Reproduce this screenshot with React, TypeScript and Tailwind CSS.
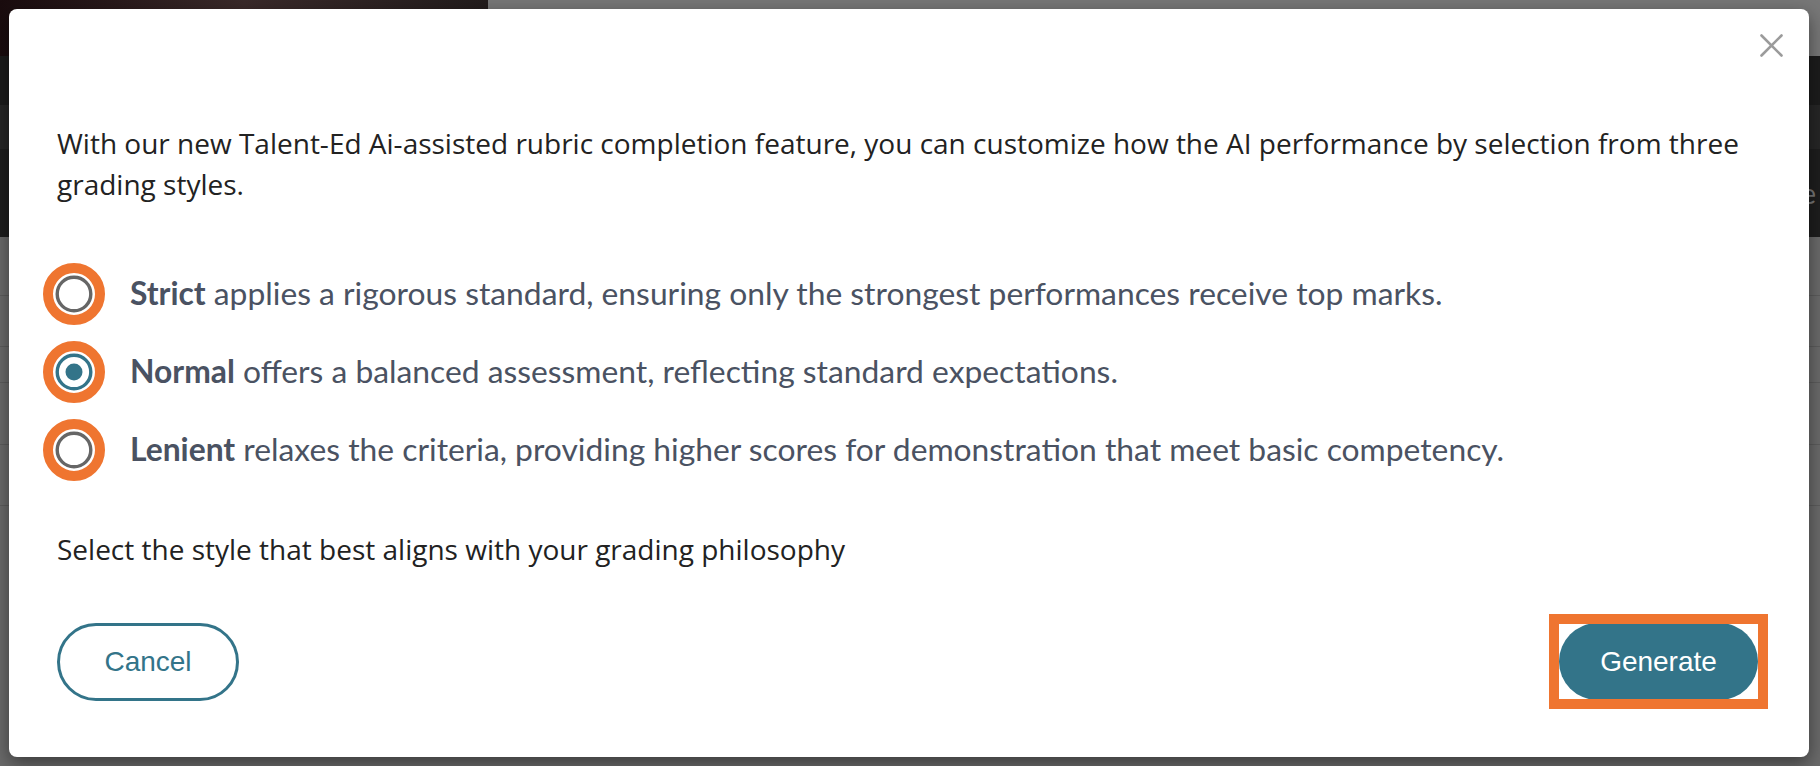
import React from 'react';

const options = [
  { name: 'Strict', text: 'applies a rigorous standard, ensuring only the strongest performances receive top marks.', selected: false },
  { name: 'Normal', text: 'offers a balanced assessment, reflecting standard expectations.', selected: true },
  { name: 'Lenient', text: 'relaxes the criteria, providing higher scores for demonstration that meet basic competency.', selected: false },
];

function Radio({ selected }: { selected: boolean }) {
  return (
    <svg width="62" height="62" viewBox="0 0 62 62" className="shrink-0 -ml-[14px]">
      <circle cx="31" cy="31" r="26" fill="white" stroke="#ef7530" strokeWidth="10" />
      <circle cx="31" cy="31" r="16.8" fill="white" stroke={selected ? '#337489' : '#666666'} strokeWidth="3.4" />
      {selected && <circle cx="31" cy="31" r="8.5" fill="#337489" />}
    </svg>
  );
}

export default function App() {
  return (
    <div className="relative w-full h-[766px] overflow-hidden bg-[#6a6a6a]">
      {/* dimmed page behind the modal */}
      <div className="flex h-[56px]">
        <div className="w-[488px] bg-gradient-to-r from-[#1a0c0e] via-[#3a2a2a] to-[#221c1c]" />
        <div className="flex-1 bg-[#777777]" />
      </div>
      <div className="h-[49px] bg-[#1c1c1c]" />
      <div className="h-[44px] bg-[#262626]" />
      <div className="h-[88px] bg-[#1e1e1e] flex items-center justify-end pr-1">
        <span className="text-[#777] text-[28px]" style={{ fontFamily: 'Lato, sans-serif' }}>e</span>
      </div>
      <div className="flex flex-col">
        <div className="h-[59px] border-b border-[#5c5c5c]" />
        <div className="h-[51px] border-b border-[#5c5c5c]" />
        <div className="h-[36px] border-b border-[#5c5c5c]" />
        <div className="h-[62px] border-b border-[#5c5c5c]" />
        <div className="h-[61px] border-b border-[#5c5c5c]" />
      </div>

      <div
        className="absolute left-[9px] top-[9px] w-[1800px] h-[748px] bg-white rounded-[8px] shadow-[0_6px_18px_rgba(0,0,0,0.45)] px-12 pt-[114px] flex flex-col"
        style={{ fontFamily: '"Open Sans", sans-serif' }}
      >
        <button className="absolute right-[26px] top-[25px] w-[23px] h-[23px]" aria-label="Close">
          <svg width="23" height="23" viewBox="0 0 23 23">
            <path d="M1.5 1.5 L21.5 21.5 M21.5 1.5 L1.5 21.5" stroke="#9b9b9b" strokeWidth="2.6" strokeLinecap="round" />
          </svg>
        </button>

        <p className="text-[28px] leading-[41px] text-[#222222]">
          With our new Talent-Ed Ai-assisted rubric completion feature, you can customize how the AI performance by selection from three grading styles.
        </p>

        <div className="mt-[58px] flex flex-col gap-4" style={{ fontFamily: 'Lato, sans-serif' }}>
          {options.map(o => (
            <label key={o.name} className="flex items-center h-[62px] gap-[25px] text-[31.8px] text-[#4a5262]">
              <Radio selected={o.selected} />
              <span>
                <span className="font-bold">{o.name}</span> {o.text}
              </span>
            </label>
          ))}
        </div>

        <p className="mt-[48px] text-[28px] leading-[41px] text-[#222222]">
          Select the style that best aligns with your grading philosophy
        </p>

        <div className="mt-[44px] flex items-center justify-between" style={{ fontFamily: '"Liberation Sans", Arial, sans-serif' }}>
          <button className="w-[182px] h-[78px] rounded-full border-[3px] border-[#337489] text-[#337489] text-[28px]">
            Cancel
          </button>
          <div className="-mr-[7px] border-[10px] border-[#ef7530] overflow-hidden">
            <button className="block w-[199px] h-[77px] -my-px rounded-full bg-[#337489] text-white text-[28px]">
              Generate
            </button>
          </div>
        </div>
      </div>
    </div>
  );
}
